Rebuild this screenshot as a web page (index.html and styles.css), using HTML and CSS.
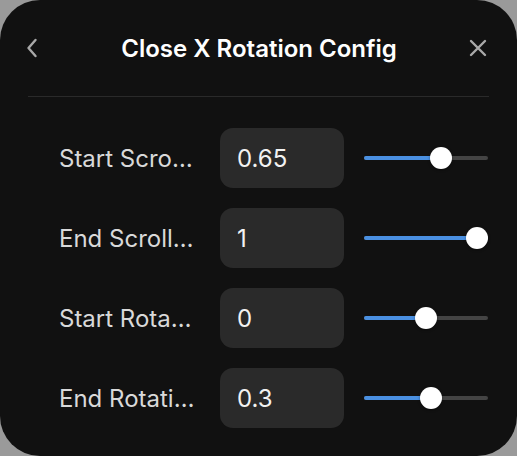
FILE: index.html
```html
<!DOCTYPE html>
<html lang="en">
<head>
    <meta charset="UTF-8">
    <meta name="viewport" content="width=device-width, initial-scale=1.0">
    <title>Close X Rotation Config</title>
    <link rel="stylesheet" href="styles.css">
</head>
<body>

    <!-- Config panel -->
    <div class="panel">
        <div class="panel-header">
            <button class="icon-btn back-btn" aria-label="Back">
                <svg width="12" height="20" viewBox="0 0 12 20"><path d="M9.5 2 L2.5 10 L9.5 18" fill="none" stroke="#a9a9a9" stroke-width="2.4" stroke-linecap="round" stroke-linejoin="round"/></svg>
            </button>
            <h1 class="panel-title">Close X Rotation Config</h1>
            <button class="icon-btn close-btn" aria-label="Close">
                <svg width="18" height="18" viewBox="0 0 18 18"><path d="M2 2 L16 16 M16 2 L2 16" fill="none" stroke="#a9a9a9" stroke-width="2.4" stroke-linecap="round"/></svg>
            </button>
        </div>
        <div class="divider"></div>

        <div class="rows">
            <div class="row">
                <span class="label">Start Scroll Progress</span>
                <div class="value-box">0.65</div>
                <div class="slider">
                    <div class="slider-fill" style="width: 66%"></div>
                    <div class="slider-thumb" style="left: calc(11px + (100% - 22px) * 0.65)"></div>
                </div>
            </div>
            <div class="row">
                <span class="label">End Scroll Progress</span>
                <div class="value-box">1</div>
                <div class="slider">
                    <div class="slider-fill" style="width: 100%"></div>
                    <div class="slider-thumb" style="left: calc(11px + (100% - 22px) * 1)"></div>
                </div>
            </div>
            <div class="row">
                <span class="label">Start Rotation</span>
                <div class="value-box">0</div>
                <div class="slider">
                    <div class="slider-fill" style="width: 50%"></div>
                    <div class="slider-thumb" style="left: calc(11px + (100% - 22px) * 0.5)"></div>
                </div>
            </div>
            <div class="row">
                <span class="label">End Rotation</span>
                <div class="value-box">0.3</div>
                <div class="slider">
                    <div class="slider-fill" style="width: 54%"></div>
                    <div class="slider-thumb" style="left: calc(11px + (100% - 22px) * 0.55)"></div>
                </div>
            </div>
        </div>
    </div>

</body>
</html>
```

FILE: styles.css
```css
/* Page */
body {
    margin: 0;
    background-color: #9a9a9a;
    font-family: Inter, "Noto Sans", sans-serif;
}

/* Panel */
.panel {
    height: 456px;
    background-color: #111111;
    border-radius: 40px;
    box-sizing: border-box;
}

.panel-header {
    height: 96px;
    padding: 0 22px 0 22px;
    display: flex;
    align-items: center;
    justify-content: space-between;
}

.icon-btn {
    width: 24px;
    height: 24px;
    padding: 0;
    border: none;
    background: none;
    display: flex;
    align-items: center;
    justify-content: center;
    cursor: pointer;
}

.back-btn {
    margin-left: -2px;
}

.close-btn {
    margin-right: 5px;
}

.panel-title {
    margin: 0 0 0 8px;
    font-size: 24px;
    font-weight: 600;
    color: #ffffff;
}

.divider {
    height: 1px;
    margin: 0 28px 0 28px;
    background-color: #2a2a2a;
}

/* Rows */
.rows {
    padding: 31px 29px 0 59px;
    display: flex;
    flex-direction: column;
    gap: 20px;
}

.row {
    display: grid;
    grid-template-columns: 137px 124px 1fr;
    column-gap: 24px;
    align-items: center;
}

.label {
    font-size: 24px;
    color: #d9d9d9;
    white-space: nowrap;
    overflow: hidden;
    text-overflow: ellipsis;
}

.value-box {
    height: 60px;
    padding-left: 17px;
    border-radius: 13px;
    background-color: #2a2a2a;
    color: #f2f2f2;
    font-size: 24px;
    display: flex;
    align-items: center;
}

/* Slider */
.slider {
    position: relative;
    height: 4px;
    margin-left: -4px;
    border-radius: 2px;
    background-color: #444444;
}

.slider-fill {
    height: 100%;
    border-radius: 2px;
    background-color: #4a90e2;
}

.slider-thumb {
    position: absolute;
    top: 50%;
    width: 22px;
    height: 22px;
    border-radius: 50%;
    background-color: #ffffff;
    transform: translate(-50%, -50%);
    box-shadow: 0 1px 3px rgba(0, 0, 0, 0.4);
}
```
